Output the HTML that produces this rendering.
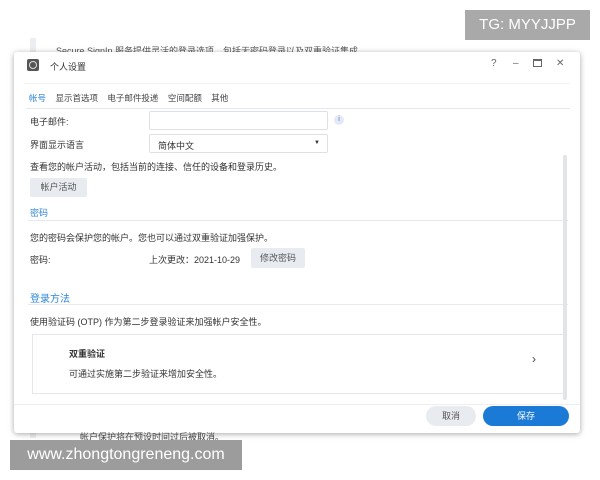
<!DOCTYPE html>
<html><head><meta charset="utf-8"><style>
*{margin:0;padding:0;box-sizing:border-box}
body{width:600px;height:480px;background:#fff;position:relative;overflow:hidden;font-family:"Liberation Sans","Noto Sans CJK SC",sans-serif;font-size:9px;color:#333}
.a{position:absolute;white-space:nowrap}
.dlg{position:absolute;left:14px;top:52px;width:566px;height:381px;background:#fff;border-radius:3px;box-shadow:0 1px 6px rgba(0,0,0,.35)}
.btn{position:absolute;background:#e8ecf1;color:#555;text-align:center;border-radius:2px}
.line{position:absolute;height:1px;background:#e6e9ee}
.blue{color:#2f86d6}
.ctl{position:absolute;top:6px;font-size:10px;color:#666}
</style></head><body>
<div class="a" style="left:30px;top:38px;width:6px;height:400px;background:#eceff2"></div>
<div class="a" style="left:56px;top:44px;font-size:9px;color:#555">Secure SignIn 服务提供灵活的登录选项，包括无密码登录以及双重验证集成。</div>
<div class="dlg">
 <div class="a" style="left:13px;top:7px;width:12px;height:12px;background:#555;border-radius:2px"></div>
 <div class="a" style="left:15px;top:9px;width:8px;height:8px;border:1px solid #ddd;border-radius:50%"></div>
 <div class="a" style="left:36px;top:8px;font-size:9px;color:#333">个人设置</div>
 <div class="ctl" style="left:477px">?</div>
 <div class="ctl" style="left:499px">–</div>
 <div class="ctl" style="left:519px;top:7px;width:9px;height:8px;border:1px solid #666;border-top-width:2px"></div>
 <div class="ctl" style="left:542px">✕</div>
 <div class="line" style="left:10px;top:31px;width:546px;background:#f0f2f4"></div>
 <div class="a" style="left:15px;top:40px;font-size:8.5px;color:#444"><span class="blue">帐号</span>&nbsp;&nbsp;&nbsp;&nbsp;显示首选项&nbsp;&nbsp;&nbsp;&nbsp;电子邮件投递&nbsp;&nbsp;&nbsp;&nbsp;空间配额&nbsp;&nbsp;&nbsp;&nbsp;其他</div>
 <div class="line" style="left:12px;top:56px;width:544px"></div>
 <div class="a" style="left:16px;top:63px">电子邮件:</div>
 <div class="a" style="left:135px;top:59px;width:179px;height:19px;border:1px solid #dde1e6;border-radius:2px"></div>
 <div class="a" style="left:320px;top:63px;width:10px;height:10px;border-radius:50%;background:#e4e9f6;color:#4a6fc0;font-size:7px;text-align:center;line-height:10px">i</div>
 <div class="a" style="left:16px;top:86px">界面显示语言</div>
 <div class="a" style="left:135px;top:82px;width:179px;height:19px;border:1px solid #dde1e6;border-radius:2px;padding:4px 8px">简体中文<span style="position:absolute;right:7px;top:5px;font-size:6px">▼</span></div>
 <div class="a" style="left:16px;top:108px">查看您的帐户活动，包括当前的连接、信任的设备和登录历史。</div>
 <div class="btn" style="left:16px;top:126px;width:57px;height:19px;line-height:19px">帐户活动</div>
 <div class="a blue" style="left:16px;top:154px">密码</div>
 <div class="line" style="left:14px;top:168px;width:540px"></div>
 <div class="a" style="left:16px;top:179px">您的密码会保护您的帐户。您也可以通过双重验证加强保护。</div>
 <div class="a" style="left:16px;top:201px">密码:</div>
 <div class="a" style="left:135px;top:201px">上次更改：2021-10-29</div>
 <div class="btn" style="left:237px;top:196px;width:54px;height:20px;line-height:20px">修改密码</div>
 <div class="a blue" style="left:16px;top:238px;font-size:10px">登录方法</div>
 <div class="line" style="left:14px;top:252px;width:540px"></div>
 <div class="a" style="left:16px;top:263px">使用验证码 (OTP) 作为第二步登录验证来加强帐户安全性。</div>
 <div class="a" style="left:18px;top:282px;width:534px;height:60px;border:1px solid #e3e6ea;border-right:none"></div>
 <div class="a" style="left:55px;top:295px;font-weight:bold;color:#333">双重验证</div>
 <div class="a" style="left:55px;top:315px">可通过实施第二步验证来增加安全性。</div>
 <div class="a" style="left:518px;top:300px;font-size:12px;color:#444">›</div>
 <div class="a" style="left:549px;top:103px;width:4px;height:245px;background:#e2e5e8;border-radius:2px"></div>
 <div class="line" style="left:0;top:352px;width:566px;background:#eceef1"></div>
 <div class="btn" style="left:412px;top:354px;width:50px;height:20px;line-height:20px;border-radius:10px">取消</div>
 <div class="a" style="left:469px;top:354px;width:86px;height:20px;border-radius:10px;background:#1a7ad6;color:#fff;text-align:center;line-height:20px">保存</div>
</div>
<div class="a" style="left:80px;top:430px;font-size:9px;color:#444">帐户保护将在预设时间过后被取消。</div>
<div class="a" style="left:465px;top:10px;width:125px;height:30px;background:#a9a9a9;color:#fff;font-size:15px;line-height:30px;text-align:center">TG: MYYJJPP</div>
<div class="a" style="left:10px;top:440px;width:232px;height:30px;background:#9c9c9c;color:#fff;font-size:16px;line-height:30px;text-align:center">www.zhongtongreneng.com</div>
</body></html>
